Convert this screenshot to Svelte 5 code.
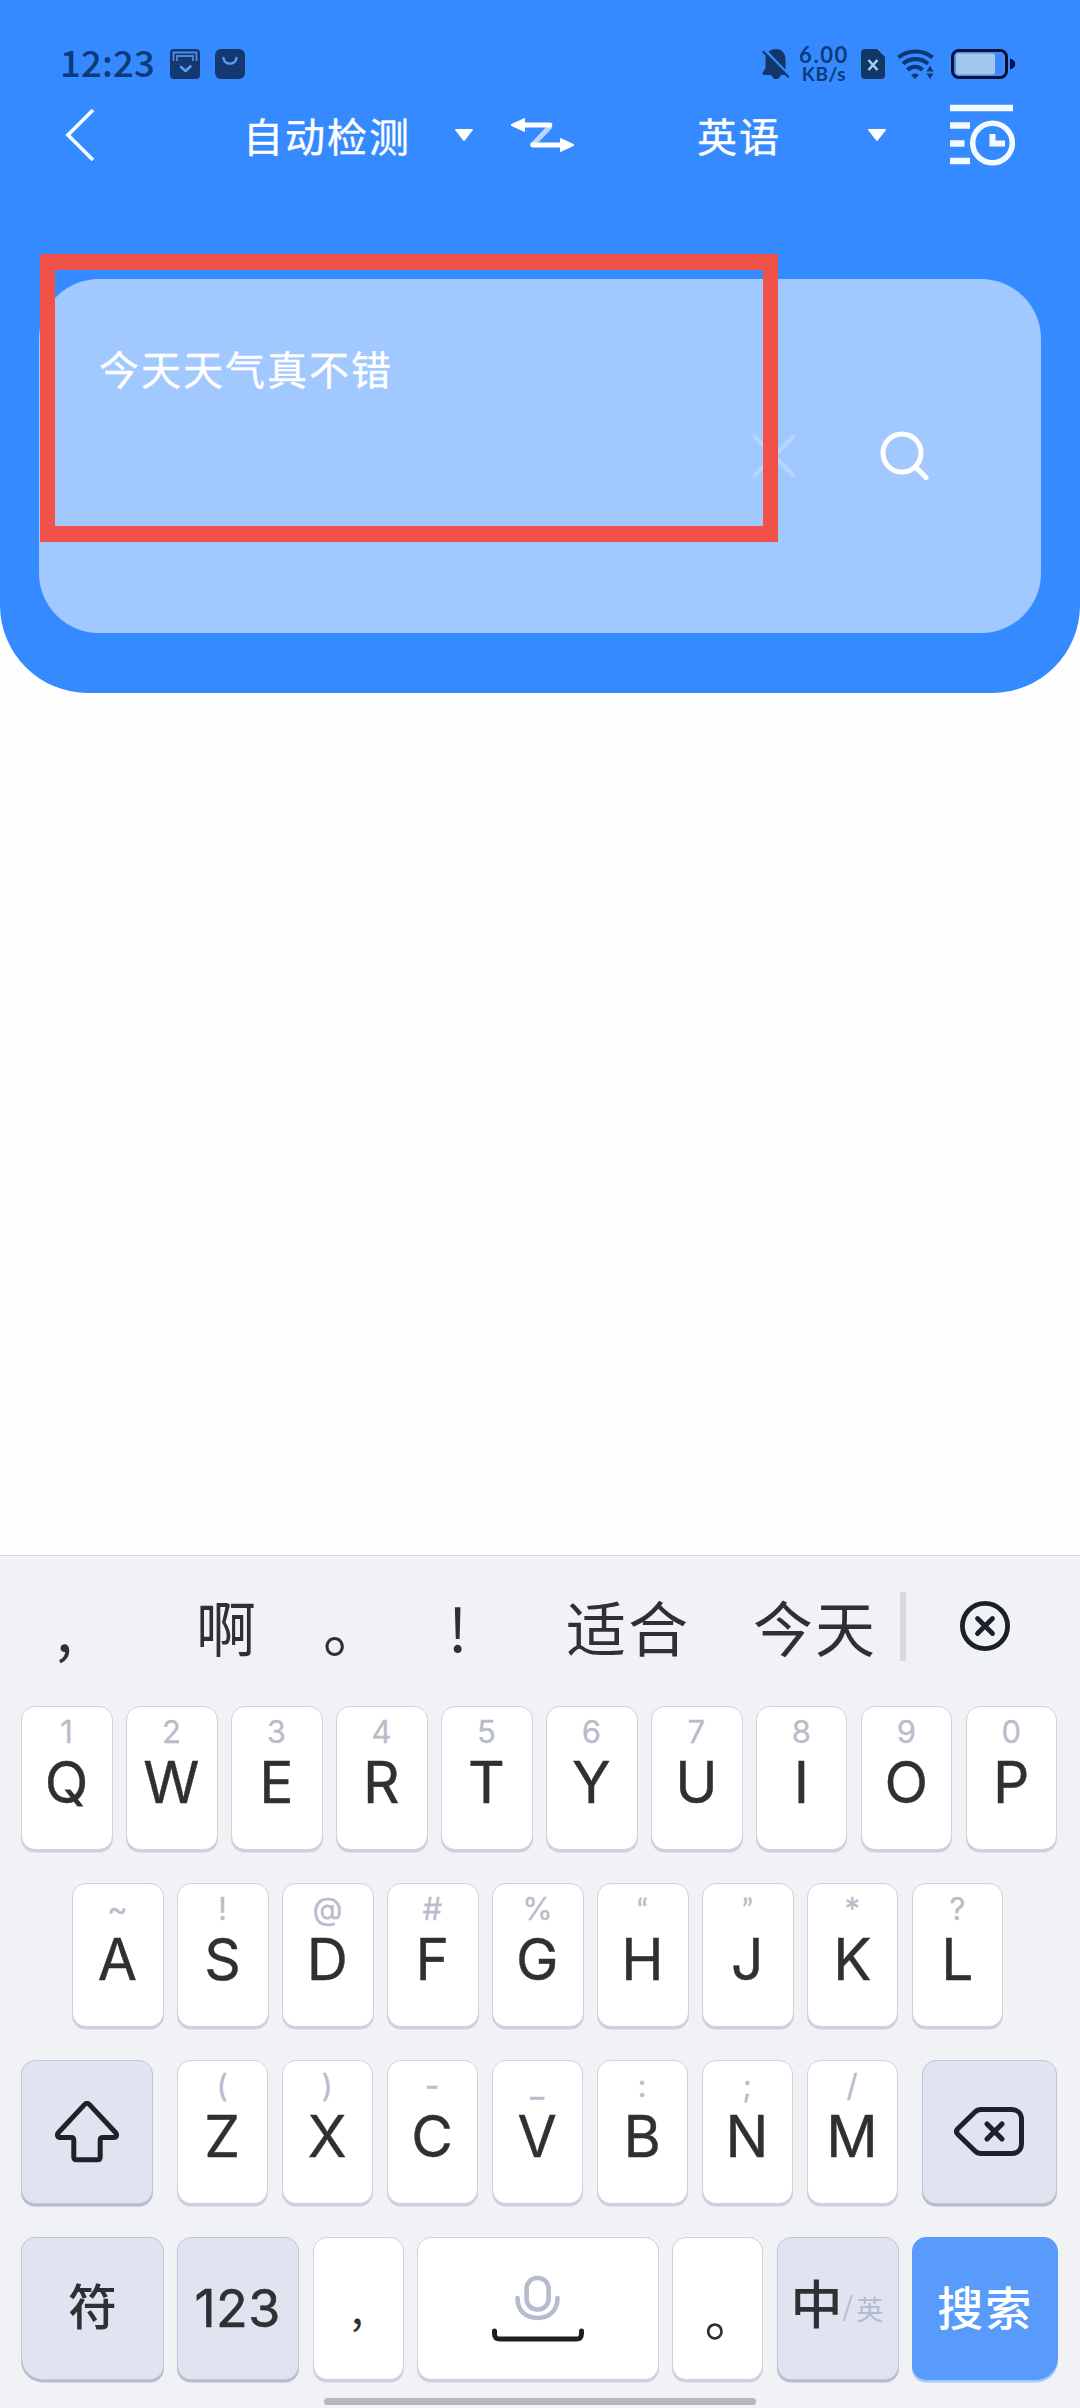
<script lang="ts">
  type Key = { label: string; hint: string };

  const toKeys = (letters: string, hints: string): Key[] =>
    [...letters].map((label, i) => ({ label, hint: [...hints][i] }));

  const topRow = toKeys('QWERTYUIOP', '1234567890');
  const homeRow = toKeys('ASDFGHJKL', '~!@#%“”*?');
  const bottomRow = toKeys('ZXCVBNM', '()-_:;/');

  let source = '今天天气真不错';
  let fromLang = '自动检测';
  let toLang = '英语';
</script>

{#snippet letterKey(key: Key)}
  <button class="key letter">
    <span class="hint" class:quote={'“”'.includes(key.hint)}>{key.hint}</span>
    <span class="main">{key.label}</span>
  </button>
{/snippet}

<div class="screen">
  <header class="header">
    <div class="status">
      <span class="time">12:23</span>
      <svg class="app-icon" viewBox="0 0 30 30" width="30" height="30">
        <rect width="30" height="30" rx="4" fill="#14386f" />
        <path d="M3.500 12V3.500h23V12M7 12V7h16v5" fill="none" stroke="#4b8ce6" stroke-width="1.800" />
        <path d="M11 18l4.500 4 5-4.500" fill="none" stroke="#5b9df0" stroke-width="2.600" stroke-linecap="round" stroke-linejoin="round" />
      </svg>
      <svg class="app-icon second" viewBox="0 0 30 30" width="30" height="30">
        <rect width="30" height="30" rx="6" fill="#14386f" />
        <path d="M8.500 9c1 7.500 12 7.500 13 0" fill="none" stroke="#5b9df0" stroke-width="2.400" stroke-linecap="round" />
      </svg>

      <svg class="bell" viewBox="0 0 28 30" width="28" height="30">
        <path d="M14 0C7.500 0 3.500 4.500 3.500 10.500V19L.8 23.500V26h8.700c.8 2.500 2 4 4.500 4s4-1.500 4.700-4h4.800V10.500C23.500 4.500 20 0 14 0z" fill="#123766" />
        <path d="M2 0l26 27" stroke="#368aff" stroke-width="2.600" />
        <path d="M.8 2.200l26 26" stroke="#123766" stroke-width="2.200" />
      </svg>
      <div class="speed">
        <span class="rate">6.00</span>
        <span class="unit">KB/s</span>
      </div>
      <svg class="sim" viewBox="0 0 24 30" width="24" height="30">
        <path d="M4 0h12l8 8v18a4 4 0 0 1-4 4H4a4 4 0 0 1-4-4V4a4 4 0 0 1 4-4z" fill="#123766" />
        <path d="M7.500 11l9 10m0-10l-9 10" stroke="#a9cdf7" stroke-width="2.600" />
      </svg>
      <svg class="wifi" viewBox="0 0 37 30" width="37" height="30">
        <g fill="none" stroke="#0b3977" stroke-width="4.200">
          <path d="M1.500 8.500c9.500-8 24.500-8 34 0" />
          <path d="M6 14.800c7-6.200 18-6.200 25 0" />
          <path d="M10.500 21c4.500-4.200 10.500-4.200 15 0" />
        </g>
        <path d="M14 26c2.500-2 5.500-2 8 0l-4 4z" fill="#0b3977" />
        <path d="M29.500 22.500l3.500-6 3.500 6zM29.500 24.500h7L33 30z" fill="#0b3977" />
      </svg>
      <svg class="battery" viewBox="0 0 65 30" width="65" height="30">
        <rect x="1.500" y="1.500" width="54" height="27" rx="6.500" fill="none" stroke="#07123c" stroke-width="3" />
        <rect x="3.800" y="3.800" width="49" height="22.400" rx="4" fill="none" stroke="#5f8be0" stroke-width="1.400" />
        <rect x="5" y="4.500" width="39" height="21" rx="2" fill="#a2c6ec" />
        <path d="M59 9.500c7 2 7 9 0 11z" fill="#07123c" />
      </svg>
    </div>

    <nav class="nav">
      <svg class="back" viewBox="0 0 30 54" width="30" height="54">
        <path d="M28 2L3 27l25 25" fill="none" stroke="#f4fbff" stroke-width="3.800" />
      </svg>
      <span class="lang from">{fromLang}</span>
      <svg class="caret" viewBox="0 0 18 12" width="18" height="12">
        <path d="M1 0h16c1 0 1.200.8.600 1.600L10 11.200c-.6.700-1.400.7-2 0L.4 1.600C-.2.800 0 0 1 0z" fill="#fff" />
      </svg>
      <svg class="swap" viewBox="0 0 63 34" width="63" height="34">
        <path d="M39.500 8L22 26.500" stroke="#b9d8ff" stroke-width="5" />
        <path d="M13 7h26M21.500 27H50" stroke="#fff" stroke-width="4.800" stroke-linecap="round" />
        <path d="M.5 6L13 .2c.6-.3 1 0 1 .6v12.400c0 .6-.4.900-1 .6L.5 8c-.8-.5-.8-1.500 0-2zM62.500 26L50 20.200c-.6-.3-1 0-1 .6v12.400c0 .6.400.900 1 .6L62.500 28c.8-.5.8-1.500 0-2z" fill="#fff" />
      </svg>
      <span class="lang to">{toLang}</span>
      <svg class="caret to-caret" viewBox="0 0 18 12" width="18" height="12">
        <path d="M1 0h16c1 0 1.200.8.600 1.600L10 11.200c-.6.700-1.400.7-2 0L.4 1.600C-.2.800 0 0 1 0z" fill="#fff" />
      </svg>
      <svg class="history" viewBox="0 0 65 62" width="65" height="62">
        <path d="M0 4h63M0 21.500h20M0 39.500h14.500M0 57h20" stroke="#f4fbff" stroke-width="6.500" />
        <circle cx="42.500" cy="39" r="19.800" fill="none" stroke="#f4fbff" stroke-width="5.500" />
        <path d="M42.500 30v9.500H55" fill="none" stroke="#f4fbff" stroke-width="6" />
      </svg>
    </nav>

    <section class="card">
      <p class="source">{source}</p>
      <svg class="clear" viewBox="0 0 42 42" width="42" height="42">
        <path d="M2 2l38 38M40 2L2 40" stroke="#b3d8ff" stroke-width="4.500" stroke-linecap="round" />
      </svg>
      <svg class="search" viewBox="0 0 50 50" width="50" height="50">
        <circle cx="22" cy="22" r="19" fill="none" stroke="#fff" stroke-width="5" />
        <path d="M36 36.500L46 46.500" stroke="#fff" stroke-width="5" stroke-linecap="round" />
      </svg>
      <div class="highlight"></div>
    </section>
  </header>

  <main class="result"></main>

  <section class="keyboard">
    <div class="candidates">
      <span class="cand c1">,</span>
      <span class="cand c2">啊</span>
      <span class="cand c3">。</span>
      <span class="cand c4">!</span>
      <span class="cand c5">适合</span>
      <span class="cand c6">今天</span>
      <i class="divider"></i>
      <svg class="dismiss" viewBox="0 0 50 50" width="50" height="50">
        <circle cx="25" cy="25" r="22.600" fill="none" stroke="#1c2028" stroke-width="4.800" />
        <path d="M17.500 17.500l15 15m0-15l-15 15" stroke="#1c2028" stroke-width="4.800" stroke-linecap="round" />
      </svg>
    </div>

    <div class="row">
      {#each topRow as key}
        {@render letterKey(key)}
      {/each}
    </div>

    <div class="row home">
      {#each homeRow as key}
        {@render letterKey(key)}
      {/each}
    </div>

    <div class="row">
      <button class="key grey shift" aria-label="Shift">
        <svg viewBox="0 0 64 62" width="64" height="62">
          <path d="M29.500 3.600L3.500 31.500c-2 2.200-1 5 1.800 5H16c1.800 0 2.800 1 2.800 2.800V56c0 1.800 1 2.800 2.800 2.800h20.800c1.800 0 2.800-1 2.800-2.800V39.300c0-1.800 1-2.800 2.800-2.800h10.700c2.800 0 3.800-2.800 1.800-5L34.500 3.600c-1.600-1.700-3.400-1.700-5 0z" fill="none" stroke="#1c2329" stroke-width="5" stroke-linejoin="round" />
        </svg>
      </button>
      {#each bottomRow as key}
        {@render letterKey(key)}
      {/each}
      <button class="key grey backspace" aria-label="Backspace">
        <svg viewBox="0 0 70 50" width="70" height="50">
          <path d="M27 2.500h30.500c6 0 10 4 10 10v24c0 6-4 10-10 10H27c-2.500 0-4.300-.8-6-2.500L4 27.500c-2-2-2-4 0-6L21 5c1.700-1.700 3.500-2.500 6-2.500z" fill="none" stroke="#1b222e" stroke-width="5" stroke-linejoin="round" />
          <path d="M33 17l15 15m0-15L33 32" stroke="#1b222e" stroke-width="5.200" stroke-linecap="round" />
        </svg>
      </button>
    </div>

    <div class="row last">
      <button class="key grey symbol">符</button>
      <button class="key grey digits">123</button>
      <button class="key punct comma">,</button>
      <button class="key space" aria-label="Space">
        <svg viewBox="0 0 92 68" width="92" height="68">
          <g fill="none" stroke="#b4bccf" stroke-width="4.600" stroke-linecap="round">
            <rect x="34.600" y="3" width="22" height="31.500" rx="10.500" />
            <path d="M25.500 23c0 12.500 8 20 20 20s20-7.500 20-20" />
          </g>
          <path d="M2.500 56v2.500c0 4 1.800 5.500 5.500 5.500h76c3.700 0 5.500-1.500 5.500-5.500V56" fill="none" stroke="#1f1f1f" stroke-width="5" stroke-linecap="round" />
        </svg>
      </button>
      <button class="key punct period">。</button>
      <button class="key grey mode">
        <span class="zh">中</span><span class="slash">/</span><span class="en">英</span>
      </button>
      <button class="key go">搜索</button>
    </div>

    <div class="home-bar"></div>
  </section>
</div>

<style>
  :global(body) {
    margin: 0;
    background: #fff;
  }
  .screen {
    display: flex;
    flex-direction: column;
    width: 1080px;
    height: 2408px;
    overflow: hidden;
    font-family: 'Noto Sans CJK SC', sans-serif;
    background: #fefefe;
  }
  svg {
    display: block;
    flex: none;
  }

  /* header */
  .header {
    box-sizing: border-box;
    height: 693px;
    background: #368aff;
    border-radius: 0 0 88px 88px;
  }
  .status {
    display: flex;
    align-items: center;
    box-sizing: border-box;
    height: 88px;
    padding: 40px 0 0 60px;
    color: #0b3b7c;
  }
  .time {
    width: 110px;
    font-size: 36.500px;
    font-weight: 500;
    line-height: 48px;
    letter-spacing: 0.2px;
    margin-top: -4px;
  }
  .second {
    margin-left: 15px;
  }
  .bell {
    margin-left: 517px;
  }
  .speed {
    display: flex;
    flex-direction: column;
    align-items: center;
    width: 50px;
    margin-left: 9px;
    font-family: Lato, sans-serif;
    font-weight: 700;
    white-space: nowrap;
  }
  .rate {
    font-size: 22px;
    line-height: 20px;
    letter-spacing: 1.6px;
    margin-top: -1px;
  }
  .unit {
    font-size: 19px;
    line-height: 18px;
    letter-spacing: 0.6px;
  }
  .sim {
    margin-left: 12px;
  }
  .wifi {
    margin-left: 12px;
  }
  .battery {
    margin-left: 17px;
  }

  .nav {
    display: flex;
    align-items: center;
    height: 94px;
    padding-left: 65px;
    color: #fff;
  }
  .lang {
    font-size: 40px;
    line-height: 60px;
    letter-spacing: 2px;
    white-space: nowrap;
    -webkit-text-stroke: 0.4px #fff;
  }
  .from {
    width: 170px;
    margin-left: 148px;
  }
  .caret {
    margin-left: 42px;
  }
  .swap {
    margin-left: 38px;
  }
  .to {
    width: 86px;
    margin-left: 123px;
  }
  .to-caret {
    margin-left: 85px;
  }
  .history {
    margin-left: 64px;
  }

  .card {
    position: relative;
    display: flex;
    align-items: center;
    box-sizing: border-box;
    width: 1002px;
    height: 354px;
    margin: 97px 0 0 39px;
    padding-left: 60px;
    background: #a1c8ff;
    border-radius: 60px;
  }
  .source {
    align-self: flex-start;
    width: 654px;
    margin: 59px 0 0;
    font-size: 40px;
    line-height: 60px;
    letter-spacing: 2px;
    color: #fff;
    -webkit-text-stroke: 0.4px #fff;
  }
  .search {
    margin-left: 85px;
  }
  .highlight {
    position: absolute;
    top: -25px;
    left: 1px;
    box-sizing: border-box;
    width: 738px;
    height: 288px;
    border: 16px solid #f0524a;
    border-left-width: 15px;
    border-right-width: 15px;
  }

  .result {
    flex: 1;
  }

  /* keyboard */
  .keyboard {
    box-sizing: border-box;
    height: 853px;
    border-top: 1px solid #d6dade;
    background: #f1f2f6;
  }
  .candidates {
    display: flex;
    align-items: center;
    height: 140px;
    margin-bottom: 10px;
    font-size: 60px;
    line-height: 88px;
    letter-spacing: 2px;
    color: #2e3033;
    white-space: nowrap;
  }
  .c1 {
    width: 140px;
    padding-left: 56px;
  }
  .c2 {
    width: 127px;
  }
  .c3 {
    width: 125px;
  }
  .c4 {
    width: 118px;
  }
  .c5 {
    width: 187px;
  }
  .c6 {
    width: 147px;
  }
  .divider {
    width: 6px;
    height: 69px;
    background: #d8d9dd;
  }
  .dismiss {
    margin-left: 54px;
  }

  .row {
    display: flex;
    gap: 13.700px;
    padding: 0 21.300px;
    margin-bottom: 33px;
  }
  .home {
    padding-left: 72.300px;
  }
  .key {
    display: flex;
    align-items: center;
    justify-content: center;
    box-sizing: border-box;
    flex: none;
    height: 144px;
    padding: 0;
    border: 1px solid #cfd2da;
    border-radius: 14px;
    background: #fff;
    box-shadow: 0 2.500px 0 #cdd1da;
    font-family: 'Noto Sans CJK SC', sans-serif;
    color: #2e3033;
  }
  .letter {
    flex-direction: column;
    justify-content: flex-start;
    width: 91.300px;
    padding: 7px 1px 0 0;
    font-family: Inter, sans-serif;
  }
  .hint {
    height: 36px;
    font-size: 31px;
    line-height: 36px;
    color: #b9bcc9;
    -webkit-text-stroke: 0.3px #b9bcc9;
  }
  .quote {
    font-family: Lato, sans-serif;
  }
  .main {
    font-size: 57px;
    line-height: 65px;
    color: #303030;
    -webkit-text-stroke: 0.4px #303030;
  }
  .grey {
    background: #dfe4f0;
    border-color: #c3c7d4;
    box-shadow: 0 2.500px 0 #b7bccb;
  }
  .shift {
    width: 132px;
    margin-right: 10px;
  }
  .backspace {
    width: 135.500px;
    margin-left: 9.700px;
  }
  .last {
    gap: 13.400px;
    margin-bottom: 0;
  }
  .last .key {
    height: 143px;
  }
  .last .symbol {
    width: 142.500px;
    padding-bottom: 10px;
    border-bottom-left-radius: 22px;
    font-size: 49px;
    font-weight: 500;
  }
  .digits {
    width: 122px;
    padding: 0 1px 0 0;
    font-family: Inter, sans-serif;
    font-size: 52px;
    letter-spacing: 0.5px;
    -webkit-text-stroke: 0.6px #2e3033;
  }
  .punct {
    width: 91.300px;
    font-size: 52px;
  }
  .comma {
    padding: 0 2px 8px 0;
    font-size: 44px;
  }
  .period {
    padding: 10px 0 0 26px;
  }
  .space {
    width: 241.500px;
  }
  .mode {
    width: 122px;
  }
  .zh {
    font-size: 52px;
    font-weight: 500;
    margin: -15px 0 0 -2px;
  }
  .slash,
  .en {
    font-size: 27px;
    color: #b5bbcf;
  }
  .slash {
    margin-top: -8px;
  }
  .en {
    margin-left: 3px;
  }
  .last .go {
    width: 146px;
    padding: 0 0 8px;
    border-color: #599bfb;
    border-bottom-right-radius: 22px;
    background: #599bfb;
    box-shadow: 0 2.500px 0 #a5c8fb;
    font-size: 46px;
    font-weight: 500;
    letter-spacing: 2px;
    color: #fff;
  }
  .home-bar {
    width: 432px;
    height: 7px;
    margin: 18px auto 0;
    border-radius: 4px;
    background: #b6b7bc;
  }
</style>
